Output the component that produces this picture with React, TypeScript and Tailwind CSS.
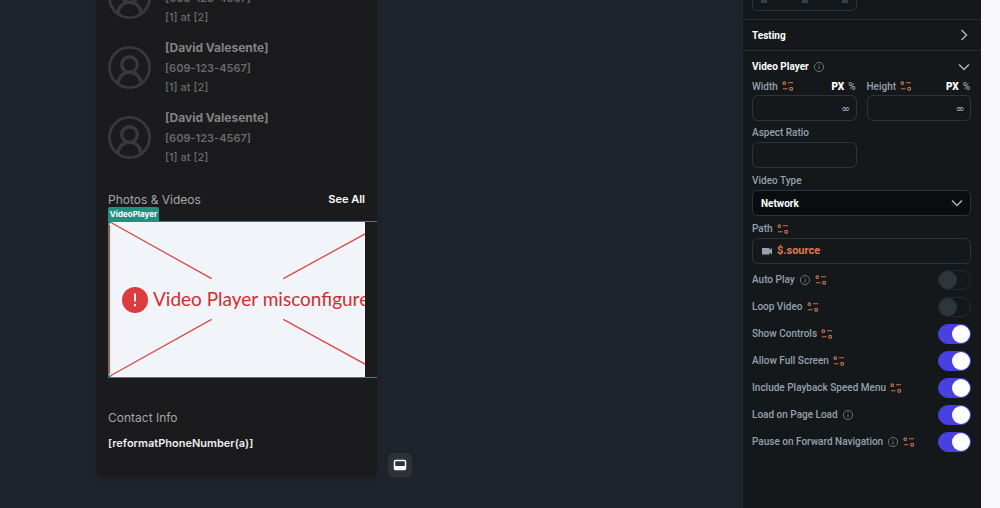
import { ReactNode, useState } from "react";

type Contact = { id: number; name: string; phone: string; time: string };

const contacts: Contact[] = [1, 2, 3].map((id) => ({
  id,
  name: "[David Valesente]",
  phone: "[609-123-4567]",
  time: "[1] at [2]"
}));

type Toggle = { id: string; label: string; info?: boolean; bindable?: boolean; on: boolean };

const toggles: Toggle[] = [
  { id: "autoPlay", label: "Auto Play", info: true, bindable: true, on: false },
  { id: "loop", label: "Loop Video", bindable: true, on: false },
  { id: "controls", label: "Show Controls", bindable: true, on: true },
  { id: "fullScreen", label: "Allow Full Screen", bindable: true, on: true },
  { id: "speed", label: "Include Playback Speed Menu", bindable: true, on: true },
  { id: "load", label: "Load on Page Load", info: true, on: true },
  { id: "pause", label: "Pause on Forward Navigation", info: true, bindable: true, on: true }
];

function BindIcon() {
  return (
    <svg className="h-3 w-3 shrink-0" viewBox="0 0 12 12" fill="none" stroke="#c8704a" strokeWidth="1.1">
      <circle cx="2.3" cy="3.2" r="1.3" />
      <path d="M6 2.800h5M1 8.800h4.500" />
      <rect x="7.900" y="7.500" width="2.600" height="2.600" rx="0.6" />
    </svg>
  );
}

function InfoIcon() {
  return (
    <svg className="h-3 w-3 shrink-0" viewBox="0 0 12 12" fill="none" stroke="#667078">
      <circle cx="6" cy="6" r="4.6" />
      <path d="M6 5.3v3.2M6 3.3v1" />
    </svg>
  );
}

function Chevron({ right }: { right?: boolean }) {
  return (
    <svg className="h-3 w-3" viewBox="0 0 12 12" fill="none" stroke="#a9b2b8" strokeWidth="1.5">
      <path d={right ? "M3.5 1l5 5-5 5" : "M1 3.5l5 5 5-5"} />
    </svg>
  );
}

function Avatar() {
  return (
    <svg className="h-[43px] w-[43px] shrink-0" viewBox="0 0 44 44" fill="none" stroke="#39383e" strokeWidth="2.8">
      <circle cx="22" cy="22" r="20.5" />
      <circle cx="22" cy="19" r="8" strokeWidth="3.4" />
      <path d="M10 38c1.500-7 6-11 12-11s10.500 4 12 11" strokeWidth="3.4" />
    </svg>
  );
}

function ContactRow({ contact }: { contact: Contact }) {
  return (
    <li className="flex h-[70px] items-center gap-3.5">
      <Avatar />
      <div>
        <p className="text-xs leading-5 font-bold text-[#828284]">{contact.name}</p>
        <p className="text-[11px] leading-5 font-semibold text-[#69696c]">{contact.phone}</p>
        <p className="text-[11px] leading-[18px] font-medium text-[#69696c]">{contact.time}</p>
      </div>
    </li>
  );
}

function VideoPreview() {
  return (
    <div className="-mr-3 border-y border-l border-[#219080]">
      <div className="relative mr-3 h-[155px] overflow-hidden rounded-l-[3px] bg-[#f1f5f9]">
        <svg
          className="absolute inset-0 h-full w-full"
          viewBox="0 0 257 156"
          preserveAspectRatio="none"
          fill="none"
          stroke="#dd4848"
          strokeWidth="1.3"
        >
          <path d="M1 0L103 57M1 155L103 98M257 12L175 57M257 143L175 98M.5 3v150" />
        </svg>
        <div className="relative flex h-full items-center gap-1 pl-3 whitespace-nowrap">
          <svg className="h-7 w-7 shrink-0" viewBox="0 0 28 28">
            <circle cx="14" cy="14" r="13" fill="#dc3b40" />
            <path d="M14 7.500v8" stroke="#f1f5f9" strokeWidth="2" />
            <path d="M14 18v2.200" stroke="#f1f5f9" strokeWidth="2" />
          </svg>
          <span className="font-[Lato,sans-serif] text-[19px] text-[#d32b30]">Video Player misconfigured</span>
        </div>
      </div>
    </div>
  );
}

function PhonePreview() {
  return (
    <div className="w-[281px] shrink-0 rounded-b-lg bg-[#1b1b1d] px-3 pb-[26px] font-[Inter,sans-serif] shadow-md">
      <ul>
        {contacts.map((contact) => (
          <ContactRow key={contact.id} contact={contact} />
        ))}
      </ul>
      <div className="mt-5 flex h-[15px] items-center justify-between text-xs">
        <h2 className="text-[#a5a5a7]">Photos &amp; Videos</h2>
        <a href="#all" className="text-[11px] font-semibold text-white">See All</a>
      </div>
      <span className="flex h-3.5 w-[51px] items-center justify-center rounded-t-xs bg-[#219080] text-[8px] font-bold text-white">
        VideoPlayer
      </span>
      <VideoPreview />
      <h2 className="mt-8 text-xs leading-4 text-[#a5a5a7]">Contact Info</h2>
      <p className="mt-[9px] text-[11px] leading-4 font-semibold text-[#ececee]">[reformatPhoneNumber(a)]</p>
    </div>
  );
}

function SizeField({ id, label }: { id: string; label: string }) {
  return (
    <div className="min-w-0 flex-1">
      <div className="flex h-4 items-center gap-1">
        <label htmlFor={id}>{label}</label>
        <BindIcon />
        <button className="ml-auto font-black text-white">PX</button>
        <button className="pr-px">%</button>
      </div>
      <div className="mt-px flex h-[26px] items-center rounded-md border border-[#2d3439] pr-1.5">
        <input id={id} className="min-w-0 flex-1 bg-transparent pl-2 outline-none" />
        <span className="font-[DejaVu_Sans,sans-serif] text-[10px] font-bold">∞</span>
      </div>
    </div>
  );
}

function ToggleRow({ toggle }: { toggle: Toggle }) {
  const [on, setOn] = useState(toggle.on);
  return (
    <div className="flex h-[27px] items-center gap-1 whitespace-nowrap">
      <label htmlFor={toggle.id}>{toggle.label}</label>
      {toggle.info ? <InfoIcon /> : null}
      {toggle.bindable ? <BindIcon /> : null}
      <input
        id={toggle.id}
        type="checkbox"
        role="switch"
        checked={on}
        onChange={(event) => setOn(event.target.checked)}
        className="ml-auto flex h-5 w-[33px] shrink-0 appearance-none items-center rounded-full border border-[#252b30] before:h-[18px] before:w-[18px] before:rounded-full before:bg-[#2d363d] checked:justify-end checked:border-[#4841e0] checked:bg-[#4841e0] checked:before:bg-white"
      />
    </div>
  );
}

function SectionHeader({ title, children }: { title: string; children?: ReactNode }) {
  return (
    <button className="flex w-full items-center gap-1 pr-[11px] pl-[9px] font-bold text-white">
      {title}
      {children}
    </button>
  );
}

function PropertiesPanel() {
  return (
    <aside className="flex h-full w-[239px] shrink-0 flex-col justify-end border-l border-[#22292e] bg-[#14181b] pb-[53px] font-[Roboto,sans-serif] text-[10px] font-medium text-[#95a1ac]">
      <div className="ml-[9px] flex h-[38px] w-[105px] shrink-0 items-end justify-between rounded-md border border-[#2d3439] px-2 pb-[7px]">
        <span className="h-3 w-1.5 bg-[#3a4147]" />
        <span className="h-3 w-1.5 bg-[#3a4147]" />
        <span className="h-3 w-1.5 bg-[#3a4147]" />
      </div>
      <div className="mt-2 flex h-8 shrink-0 border-y border-[#262c30]">
        <SectionHeader title="Testing">
          <span className="ml-auto"><Chevron right /></span>
        </SectionHeader>
      </div>
      <div className="flex h-[27px] shrink-0 pt-1">
        <SectionHeader title="Video Player">
          <InfoIcon />
          <span className="ml-auto"><Chevron /></span>
        </SectionHeader>
      </div>
      <div className="shrink-0 pr-2.5 pl-[9px]">
        <div className="flex gap-2.5">
          <SizeField id="width" label="Width" />
          <SizeField id="height" label="Height" />
        </div>
        <label htmlFor="ratio" className="mt-[3px] block leading-[17px]">Aspect Ratio</label>
        <input id="ratio" className="mt-px block h-[26px] w-[105px] rounded-md border border-[#2d3439] px-2 outline-none" />
        <label htmlFor="type" className="mt-1 block leading-[17px]">Video Type</label>
        <div className="relative">
          <select
            id="type"
            className="mt-px block h-[26px] w-full appearance-none rounded-md border border-[#2d3439] bg-[#090d10] px-2 font-bold text-white"
          >
            <option>Network</option>
            <option>Asset</option>
          </select>
          <span className="pointer-events-none absolute inset-y-0 right-2 flex items-center"><Chevron /></span>
        </div>
        <div className="mt-1 flex h-[17px] items-center gap-1">
          <label htmlFor="path">Path</label>
          <BindIcon />
        </div>
        <div className="mt-px mb-0.5 flex h-[26px] items-center gap-1 rounded-md border border-[#2d3439] px-2">
          <svg className="h-3 w-3" viewBox="0 0 12 12" fill="#95a1ac">
            <path d="M1 3h7.500v2L11 3v6.500L8.500 7.500v2H1z" />
          </svg>
          <input id="path" defaultValue="$.source" className="min-w-0 flex-1 bg-transparent text-[11px] font-bold text-[#e07a4e] outline-none" />
        </div>
        {toggles.map((toggle) => (
          <ToggleRow key={toggle.id} toggle={toggle} />
        ))}
      </div>
    </aside>
  );
}

export default function App() {
  return (
    <div className="flex h-screen overflow-hidden bg-[#f8f8fd] pr-[19px] font-[Inter,sans-serif]">
      <main className="flex min-w-0 flex-1 items-end gap-[11px] bg-[#1f242c] pb-[31px] pl-24">
        <PhonePreview />
        <button
          aria-label="Toggle device frame"
          className="flex h-6 w-6 shrink-0 items-center justify-center rounded-md bg-[#2b323a]"
        >
          <svg className="h-4 w-4" viewBox="0 0 16 16">
            <rect x="2.500" y="3.500" width="11" height="9" rx="1" fill="none" stroke="#fff" strokeWidth="1.500" />
            <path d="M3 9h10v3H3z" fill="#fff" />
          </svg>
        </button>
      </main>
      <PropertiesPanel />
    </div>
  );
}
